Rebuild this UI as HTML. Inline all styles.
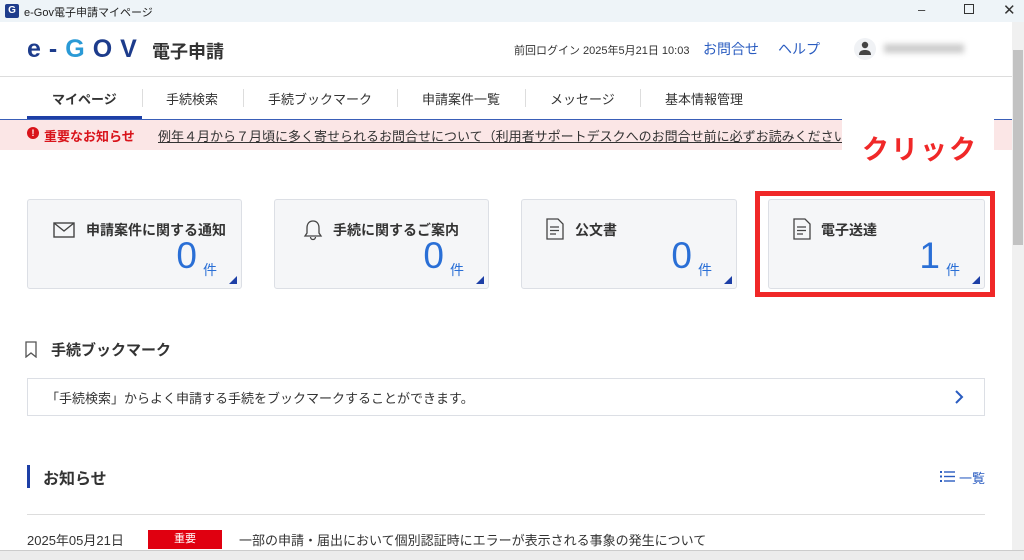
<!DOCTYPE html>
<html><head><meta charset="utf-8"><style>
*{margin:0;padding:0;box-sizing:border-box}
body{width:1024px;height:560px;overflow:hidden;position:relative;background:#fff;font-family:"Liberation Sans","Noto Sans CJK JP",sans-serif;color:#333}
.a{position:absolute}
.card{position:absolute;top:199px;height:90px;background:#f5f6f8;border:1px solid #dcdfe5;border-radius:3px}
.card .t{position:absolute;top:20px;font-size:14px;font-weight:bold;color:#333;white-space:nowrap}
.card .n{position:absolute;right:44px;top:36px;font-size:37px;color:#2a6fd6;line-height:40px}
.card .k{position:absolute;right:24px;top:60px;font-size:14px;color:#2a6fd6}
.card .tri{position:absolute;right:4px;bottom:4px;width:0;height:0;border-left:8px solid transparent;border-bottom:8px solid #1d3fa6}
.nav{position:absolute;top:89px;font-size:13px;color:#333;white-space:nowrap}
.sep{position:absolute;top:89px;width:1px;height:18px;background:#ddd}
</style></head><body>
<div class="a" style="left:0;top:0;width:1024px;height:22px;background:#eef4f8"></div>
<div class="a" style="left:5px;top:4px;width:14px;height:14px;background:#1e3c8c;border-radius:2px;color:#fff;font-size:10px;font-weight:bold;text-align:center;line-height:14px">G</div>
<div class="a" style="left:24px;top:4px;font-size:11px;color:#222">e-Gov電子申請マイページ</div>
<div class="a" style="left:918px;top:2px;font-size:13px;color:#333">–</div>
<div class="a" style="left:964px;top:4px;width:10px;height:10px;border:1.5px solid #333"></div>
<div class="a" style="left:1003px;top:1px;font-size:15px;color:#333">✕</div>
<!-- scrollbar -->
<div class="a" style="left:1012px;top:22px;width:12px;height:528px;background:#f0f0f0"></div>
<div class="a" style="left:1013px;top:50px;width:10px;height:195px;background:#c2c2c2"></div>
<div class="a" style="left:0;top:550px;width:1024px;height:10px;background:#ececec;border-top:1px solid #ccc"></div>
<!-- header -->
<div class="a" style="left:27px;top:34px;font-size:25px;font-weight:bold;letter-spacing:8px;color:#1d3c8c;line-height:30px;white-space:nowrap">e-<span style="color:#2a9ad6">G</span>OV</div>
<div class="a" style="left:152px;top:38px;font-size:18px;font-weight:bold;color:#333">電子申請</div>
<div class="a" style="left:514px;top:42px;font-size:11px;color:#333">前回ログイン 2025年5月21日 10:03</div>
<div class="a" style="left:703px;top:39px;font-size:14px;color:#2a5cc0">お問合せ</div>
<div class="a" style="left:778px;top:39px;font-size:14px;color:#2a5cc0">ヘルプ</div>
<div class="a" style="left:854px;top:38px;width:22px;height:22px;border-radius:50%;background:#f0f2f5"></div>
<svg class="a" style="left:857px;top:40px" width="16" height="16" viewBox="0 0 16 16"><circle cx="8" cy="5" r="3.2" fill="#444"/><path d="M2 15c0-4 3-5 6-5s6 1 6 5z" fill="#444"/></svg>
<div class="a" style="left:884px;top:44px;width:80px;height:9px;background:#ccc;filter:blur(3px)"></div>
<div class="a" style="left:0;top:76px;width:1012px;height:1px;background:#ddd"></div>
<!-- nav -->
<div class="nav" style="left:52px;font-weight:bold">マイページ</div>
<div class="sep" style="left:142px"></div>
<div class="nav" style="left:166px">手続検索</div>
<div class="sep" style="left:243px"></div>
<div class="nav" style="left:268px">手続ブックマーク</div>
<div class="sep" style="left:397px"></div>
<div class="nav" style="left:422px">申請案件一覧</div>
<div class="sep" style="left:525px"></div>
<div class="nav" style="left:550px">メッセージ</div>
<div class="sep" style="left:640px"></div>
<div class="nav" style="left:665px">基本情報管理</div>
<div class="a" style="left:27px;top:116px;width:115px;height:4px;background:#1d3fa6"></div>
<div class="a" style="left:0;top:119px;width:1012px;height:1px;background:#3a5fb8"></div>
<div class="a" style="left:0;top:120px;width:1012px;height:30px;background:#fbe6e6"></div>
<div class="a" style="left:27px;top:127px;width:12px;height:12px;border-radius:50%;background:#d9141b;color:#fff;font-size:9px;font-weight:bold;text-align:center;line-height:12px">!</div>
<div class="a" style="left:44px;top:126px;font-size:13px;font-weight:bold;color:#d9141b">重要なお知らせ</div>
<div class="a" style="left:158px;top:126px;font-size:13px;color:#333;text-decoration:underline;white-space:nowrap">例年４月から７月頃に多く寄せられるお問合せについて（利用者サポートデスクへのお問合せ前に必ずお読みください</div>
<div class="a" style="left:842px;top:118px;width:152px;height:48px;background:#fff"></div>
<div class="a" style="left:862px;top:128px;font-size:27px;font-weight:bold;color:#f02828;letter-spacing:2px">クリック</div>
<!-- cards -->
<div class="card" style="left:27px;width:215px">
<svg class="a" style="left:25px;top:22px" width="22" height="16" viewBox="0 0 22 16"><rect x="1" y="1" width="20" height="14" fill="none" stroke="#444" stroke-width="1.4"/><path d="M1 1l10 8 10-8" fill="none" stroke="#444" stroke-width="1.4"/></svg>
<div class="t" style="left:58px">申請案件に関する通知</div><div class="n">0</div><div class="k">件</div><div class="tri"></div></div>
<div class="card" style="left:274px;width:215px">
<svg class="a" style="left:28px;top:19px" width="20" height="22" viewBox="0 0 20 22"><path d="M10 2c-4 0-6 3-6 7v5l-2 3h16l-2-3V9c0-4-2-7-6-7zM7.5 18a2.5 2.5 0 005 0" fill="none" stroke="#444" stroke-width="1.3"/></svg>
<div class="t" style="left:58px">手続に関するご案内</div><div class="n">0</div><div class="k">件</div><div class="tri"></div></div>
<div class="card" style="left:521px;width:216px">
<svg class="a" style="left:24px;top:18px" width="18" height="22" viewBox="0 0 18 22"><path d="M1 1h11l5 5v15H1z" fill="none" stroke="#444" stroke-width="1.3"/><path d="M4 9h9M4 12.5h9M4 16h6" stroke="#444" stroke-width="1.2"/></svg>
<div class="t" style="left:53px">公文書</div><div class="n">0</div><div class="k">件</div><div class="tri"></div></div>
<div class="card" style="left:768px;width:217px">
<svg class="a" style="left:24px;top:18px" width="18" height="22" viewBox="0 0 18 22"><path d="M1 1h11l5 5v15H1z" fill="none" stroke="#444" stroke-width="1.3"/><path d="M4 9h9M4 12.5h9M4 16h6" stroke="#444" stroke-width="1.2"/></svg>
<div class="t" style="left:52px">電子送達</div><div class="n">1</div><div class="k">件</div><div class="tri"></div></div>
<div class="a" style="left:755px;top:191px;width:240px;height:106px;border:5px solid #f02828"></div>
<!-- bookmark -->
<svg class="a" style="left:25px;top:341px" width="12" height="17" viewBox="0 0 12 17"><path d="M1 1h10v15l-5-4-5 4z" fill="none" stroke="#555" stroke-width="1.3"/></svg>
<div class="a" style="left:51px;top:339px;font-size:15px;font-weight:bold;color:#333">手続ブックマーク</div>
<div class="a" style="left:27px;top:378px;width:958px;height:38px;border:1px solid #dcdfe5"></div>
<div class="a" style="left:46px;top:388px;font-size:13px;color:#333">「手続検索」からよく申請する手続をブックマークすることができます。</div>
<svg class="a" style="left:954px;top:390px" width="10" height="14" viewBox="0 0 10 14"><path d="M2 1l6 6-6 6" fill="none" stroke="#2a5cc0" stroke-width="2"/></svg>
<!-- news -->
<div class="a" style="left:27px;top:465px;width:3px;height:23px;background:#1d3fa6"></div>
<div class="a" style="left:43px;top:465px;font-size:16px;font-weight:bold;color:#333">お知らせ</div>
<svg class="a" style="left:940px;top:471px" width="15" height="11" viewBox="0 0 15 11"><g fill="#2a5cc0"><rect x="0" y="0" width="2" height="2"/><rect x="0" y="4.5" width="2" height="2"/><rect x="0" y="9" width="2" height="2"/><rect x="4" y="0.3" width="11" height="1.4"/><rect x="4" y="4.8" width="11" height="1.4"/><rect x="4" y="9.3" width="11" height="1.4"/></g></svg>
<div class="a" style="left:959px;top:468px;font-size:13px;color:#2a5cc0">一覧</div>
<div class="a" style="left:27px;top:514px;width:958px;height:1px;background:#ddd"></div>
<div class="a" style="left:27px;top:530px;font-size:13px;color:#333">2025年05月21日</div>
<div class="a" style="left:148px;top:530px;width:74px;height:19px;background:#e00010;color:#fff;font-size:11px;text-align:center;line-height:19px">重要</div>
<div class="a" style="left:239px;top:530px;font-size:13px;color:#333;white-space:nowrap">一部の申請・届出において個別認証時にエラーが表示される事象の発生について</div>
</body></html>
